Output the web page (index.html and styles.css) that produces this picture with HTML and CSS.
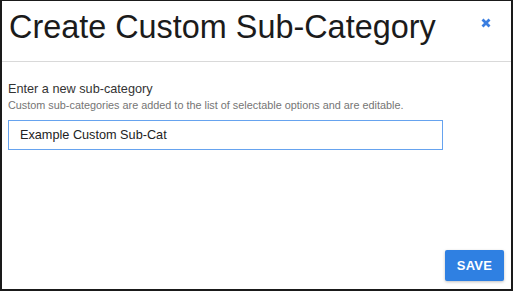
FILE: index.html
```html
<!DOCTYPE html>
<html>
<head>
<meta charset="utf-8">
<link rel="stylesheet" href="styles.css">
</head>
<body>
<div class="dialog">
  <div class="header">
    <h1 class="title">Create Custom Sub-Category</h1>
    <span class="close">
      <svg width="10" height="10" viewBox="0 0 10 10"><path d="M1.5 1.5 L8.5 8.5 M8.5 1.5 L1.5 8.5" stroke="#3a7ee0" stroke-width="2.8" stroke-linecap="butt"/></svg>
    </span>
  </div>
  <div class="body">
    <div class="label">Enter a new sub-category</div>
    <div class="help">Custom sub-categories are added to the list of selectable options and are editable.</div>
    <div class="input">Example Custom Sub-Cat</div>
  </div>
  <div class="footer">
    <button class="save">SAVE</button>
  </div>
</div>
</body>
</html>
```
FILE: styles.css
```css
html, body {
  margin: 0;
  padding: 0;
  background: #fff;
}
body {
  font-family: "Liberation Sans", Arial, sans-serif;
}
.dialog {
  width: 513px;
  height: 291px;
  box-sizing: border-box;
  border: 2px solid #1a1a1a;
  border-top-width: 1px;
  border-right-width: 2px;
  display: flex;
  flex-direction: column;
}
.header {
  height: 60px;
  border-bottom: 1px solid #d9d9d9;
  display: flex;
  align-items: flex-start;
  justify-content: space-between;
  padding: 0 20px 0 7px;
}
.title {
  margin: 8px 0 0 0;
  font-weight: normal;
  font-size: 32.4px;
  line-height: 36px;
  color: #1b1b1b;
}
.close {
  margin-top: 17px;
  display: flex;
}
.body {
  padding: 19px 68px 0 6px;
  flex: 1;
}
.label {
  font-size: 12.7px;
  line-height: 16px;
  color: #333;
}
.help {
  font-size: 10.85px;
  line-height: 14px;
  color: #757575;
  margin-top: 1px;
}
.input {
  margin-top: 8px;
  height: 30px;
  box-sizing: border-box;
  border: 1px solid #66a3ef;
  padding: 0 11px;
  font-size: 12.7px;
  line-height: 28px;
  color: #222;
}
.footer {
  display: flex;
  justify-content: flex-end;
  padding: 0 7px 8px 0;
}
.save {
  width: 59px;
  height: 31px;
  border: none;
  border-radius: 2px;
  background: #2f80e2;
  color: #fff;
  font-family: "Liberation Sans", Arial, sans-serif;
  font-weight: bold;
  font-size: 13px;
  letter-spacing: 0.3px;
  box-shadow: 0 1px 3px rgba(0,0,0,0.25);
  padding: 0;
}
```
